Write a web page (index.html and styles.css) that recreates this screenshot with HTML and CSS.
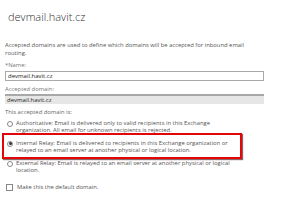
FILE: index.html
```html
<!DOCTYPE html>
<html lang="en">
<head>
    <meta charset="UTF-8">
    <meta name="viewport" content="width=device-width, initial-scale=1.0">
    <title>devmail.havit.cz</title>
    <link rel="stylesheet" href="styles.css">
</head>
<body>
    <div class="page">
        <h1 class="title">devmail.havit.cz</h1>
        <div class="content">
            <p class="intro">Accepted domains are used to define which domains will be accepted for inbound email<br>routing.</p>

            <div class="field">
                <label for="name">*Name:</label>
                <input type="text" id="name" class="textbox" value="devmail.havit.cz">
            </div>
            <div class="field">
                <label for="domain">Accepted domain:</label>
                <input type="text" id="domain" class="textbox readonly" value="devmail.havit.cz" readonly>
            </div>

            <p class="label">This accepted domain is:</p>
            <div class="options">
                <div class="option">
                    <span class="radio"></span>
                    <span>Authoritative: Email is delivered only to valid recipients in this Exchange<br>organization. All email for unknown recipients is rejected.</span>
                </div>
                <div class="option">
                    <span class="radio checked"></span>
                    <span>Internal Relay: Email is delivered to recipients in this Exchange organization or<br>relayed to an email server at another physical or logical location.</span>
                </div>
                <div class="option">
                    <span class="radio"></span>
                    <span>External Relay: Email is relayed to an email server at another physical or logical<br>location.</span>
                </div>
            </div>

            <div class="check">
                <span class="checkbox"></span>
                <span>Make this the default domain.</span>
            </div>
        </div>
        <div class="highlight"></div>
    </div>
</body>
</html>
```

FILE: styles.css
```css
* {
    margin: 0;
    padding: 0;
    box-sizing: border-box;
}
body {
    background-color: #fff;
    font-family: "Open Sans", "Noto Sans", sans-serif;
    color: #444;
}
.page {
    position: relative;
    width: 300px;
    height: 213px;
    overflow: hidden;
}
.title {
    font-size: 11px;
    font-weight: 300;
    color: #333;
    padding: 10px 0 0 8px;
    line-height: 14px;
}
.content {
    padding: 18px 0 0 5px;
    font-size: 5.85px;
    line-height: 7.5px;
}
.intro {
    color: #555;
}
.field {
    display: flex;
    flex-direction: column;
    margin-top: 5px;
}
.field label {
    color: #777;
    margin-bottom: 1px;
}
.textbox {
    width: 259px;
    height: 10px;
    border: 1px solid #aaa;
    font-family: inherit;
    font-size: 6px;
    color: #222;
    padding: 0 2px;
    outline: none;
}
.readonly {
    background-color: #e6e6e6;
    border: 0;
    border-top: 2px solid #a8a8a8;
}
.label {
    color: #666;
    margin-top: 5px;
}
.options {
    display: flex;
    flex-direction: column;
    gap: 5px;
    margin-top: 3px;
    color: #555;
}
.option {
    display: flex;
    gap: 3px;
    padding-left: 2px;
}
.radio {
    flex: none;
    width: 6px;
    height: 6px;
    margin-top: 1px;
    border: 1px solid #888;
    border-radius: 50%;
    display: flex;
    align-items: center;
    justify-content: center;
}
.radio.checked::after {
    content: "";
    width: 3px;
    height: 3px;
    border-radius: 50%;
    background-color: #333;
}
.check {
    display: flex;
    gap: 4px;
    margin-top: 9px;
    padding-left: 1px;
    color: #555;
}
.checkbox {
    flex: none;
    width: 7px;
    height: 7px;
    border: 1px solid #888;
}
.highlight {
    position: absolute;
    left: 2px;
    top: 133px;
    width: 240px;
    height: 26px;
    border: 2px solid #e2060b;
    box-shadow: 1px 1px 1px rgba(60, 0, 0, 0.6);
}
```
